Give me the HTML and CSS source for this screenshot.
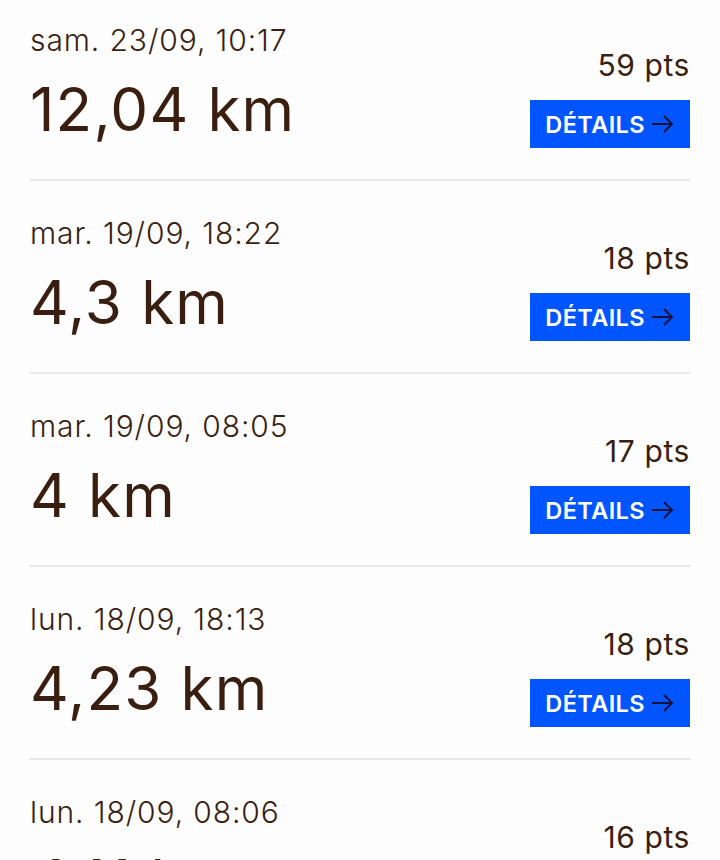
FILE: index.html
```html
<!DOCTYPE html>
<html lang="fr">
<head>
    <meta charset="UTF-8">
    <meta name="viewport" content="width=device-width, initial-scale=1.0">
    <title>Activités</title>
    <link rel="stylesheet" href="styles.css">
</head>
<body>
    <div class="activities">

        <div class="activity">
            <div class="info">
                <div class="date">sam. 23/09, 10:17</div>
                <div class="distance">12,04 km</div>
            </div>
            <div class="side">
                <div class="points">59 pts</div>
                <a class="btn" href="#">DÉTAILS<svg class="arrow" viewBox="0 0 22 18"><path d="M0 9h20M12 1l8 8-8 8"/></svg></a>
            </div>
        </div>

        <div class="activity">
            <div class="info">
                <div class="date">mar. 19/09, 18:22</div>
                <div class="distance">4,3 km</div>
            </div>
            <div class="side">
                <div class="points">18 pts</div>
                <a class="btn" href="#">DÉTAILS<svg class="arrow" viewBox="0 0 22 18"><path d="M0 9h20M12 1l8 8-8 8"/></svg></a>
            </div>
        </div>

        <div class="activity">
            <div class="info">
                <div class="date">mar. 19/09, 08:05</div>
                <div class="distance">4 km</div>
            </div>
            <div class="side">
                <div class="points">17 pts</div>
                <a class="btn" href="#">DÉTAILS<svg class="arrow" viewBox="0 0 22 18"><path d="M0 9h20M12 1l8 8-8 8"/></svg></a>
            </div>
        </div>

        <div class="activity">
            <div class="info">
                <div class="date">lun. 18/09, 18:13</div>
                <div class="distance">4,23 km</div>
            </div>
            <div class="side">
                <div class="points">18 pts</div>
                <a class="btn" href="#">DÉTAILS<svg class="arrow" viewBox="0 0 22 18"><path d="M0 9h20M12 1l8 8-8 8"/></svg></a>
            </div>
        </div>

        <div class="activity">
            <div class="info">
                <div class="date">lun. 18/09, 08:06</div>
                <div class="distance">4,11 km</div>
            </div>
            <div class="side">
                <div class="points">16 pts</div>
                <a class="btn" href="#">DÉTAILS<svg class="arrow" viewBox="0 0 22 18"><path d="M0 9h20M12 1l8 8-8 8"/></svg></a>
            </div>
        </div>

    </div>
</body>
</html>
```

FILE: styles.css
```css
/* Activity list */
body { margin: 0; font-family: Inter, Roboto, sans-serif; background-color: #fdfdfd; color: #3a1f10; overflow: hidden; }
.activities { padding: 0 30px; }
.activity { display: flex; justify-content: space-between; align-items: flex-end; padding: 34px 0 31px; border-bottom: 2px solid #e8e8e8; }
.activity:first-child { padding-top: 22px; }
.date { font-size: 30px; font-weight: 300; line-height: 36px; letter-spacing: 0.9px; }
.distance { font-size: 60px; line-height: 78px; margin-top: 12px; letter-spacing: 1.2px; }
.side { display: flex; flex-direction: column; align-items: flex-end; }
.points { font-size: 30px; line-height: 38px; margin-bottom: 16px; letter-spacing: 0.6px; }
.btn { display: flex; align-items: center; height: 48px; padding: 0 16px 0 15px; background-color: #0055ff; color: #fff; font-size: 23.5px; font-weight: 600; letter-spacing: 0.4px; text-decoration: none; }
.arrow { width: 22px; height: 18px; margin-left: 7px; fill: none; stroke: #16123a; stroke-width: 2; }
```
